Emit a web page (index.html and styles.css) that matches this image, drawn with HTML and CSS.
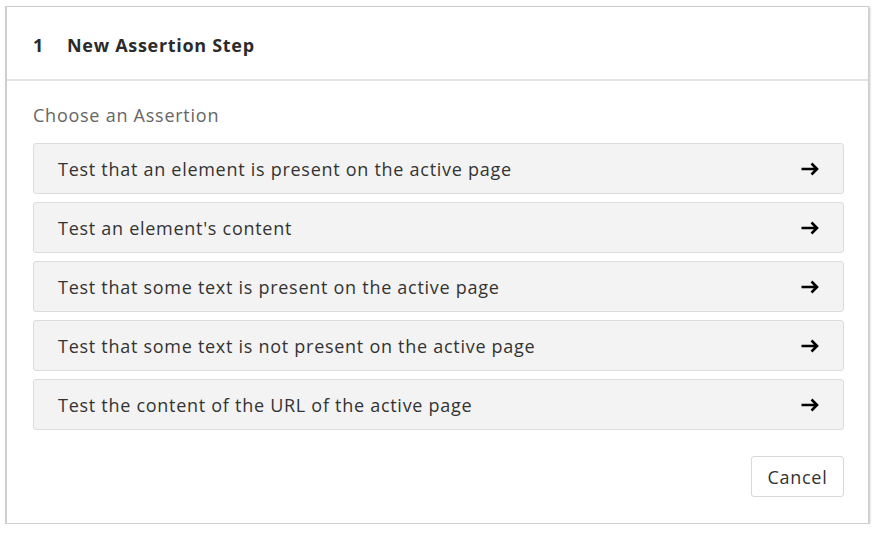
FILE: index.html
```html
<!DOCTYPE html>
<html>
<head>
<meta charset="utf-8">
<link rel="stylesheet" href="styles.css">
</head>
<body>
<div class="panel">
  <div class="panel-header">
    <span class="step-num">1</span>
    <span class="step-title">New Assertion Step</span>
  </div>
  <div class="panel-body">
    <div class="label">Choose an Assertion</div>
    <div class="options">
      <div class="option"><span>Test that an element is present on the active page</span><svg class="arrow" viewBox="0 0 18 14" width="18" height="14"><path d="M0.5 7H16M10.5 1.5L16 7L10.5 12.5"/></svg></div>
      <div class="option"><span>Test an element's content</span><svg class="arrow" viewBox="0 0 18 14" width="18" height="14"><path d="M0.5 7H16M10.5 1.5L16 7L10.5 12.5"/></svg></div>
      <div class="option"><span>Test that some text is present on the active page</span><svg class="arrow" viewBox="0 0 18 14" width="18" height="14"><path d="M0.5 7H16M10.5 1.5L16 7L10.5 12.5"/></svg></div>
      <div class="option"><span>Test that some text is not present on the active page</span><svg class="arrow" viewBox="0 0 18 14" width="18" height="14"><path d="M0.5 7H16M10.5 1.5L16 7L10.5 12.5"/></svg></div>
      <div class="option"><span>Test the content of the URL of the active page</span><svg class="arrow" viewBox="0 0 18 14" width="18" height="14"><path d="M0.5 7H16M10.5 1.5L16 7L10.5 12.5"/></svg></div>
    </div>
    <div class="footer">
      <button class="btn">Cancel</button>
    </div>
  </div>
</div>
</body>
</html>
```

FILE: styles.css
```css
* { box-sizing: border-box; }
html, body { margin: 0; padding: 0; background: #fff; }
body {
  font-family: "Open Sans", "Liberation Sans", sans-serif;
  color: #333;
  padding: 6px 9px 0 5px;
}
.panel {
  width: 864px;
  height: 518px;
  border: 1px solid #cfcfd3;
  border-left-width: 2px;
  box-shadow: 1px 1px 2px rgba(0,0,0,0.25);
  background: #fff;
}
.panel-header {
  height: 74px;
  border-bottom: 2px solid #e3e3e6;
  display: flex;
  align-items: center;
  padding: 3px 0 0 26px;
  font-weight: 700;
  font-size: 18px;
  letter-spacing: 0.7px;
  color: #2b2b2b;
}
.step-num { width: 34px; }
.panel-body {
  padding: 22px 24px 0 26px;
}
.label {
  font-size: 18px;
  letter-spacing: 0.75px;
  color: #666;
  line-height: 24px;
  margin-bottom: 16px;
}
.options {
  display: flex;
  flex-direction: column;
  gap: 8px;
}
.option {
  height: 51px;
  background: #f3f3f3;
  border: 1px solid #dcdcdf;
  border-radius: 3px;
  display: flex;
  align-items: center;
  justify-content: space-between;
  padding: 0 24px 0 24px;
  font-size: 18px;
  letter-spacing: 0.72px;
  color: #333;
}
.arrow {
  display: block;
  fill: none;
  stroke: #000;
  stroke-width: 2.6;
  stroke-linejoin: miter;
  flex-shrink: 0;
}
.footer {
  display: flex;
  justify-content: flex-end;
  margin-top: 26px;
}
.btn {
  font-family: "Open Sans", "Liberation Sans", sans-serif;
  font-size: 18px;
  letter-spacing: 0.7px;
  color: #333;
  background: #fff;
  border: 1px solid #d8d8db;
  border-radius: 3px;
  width: 93px;
  height: 41px;
  padding: 0;
}
```
